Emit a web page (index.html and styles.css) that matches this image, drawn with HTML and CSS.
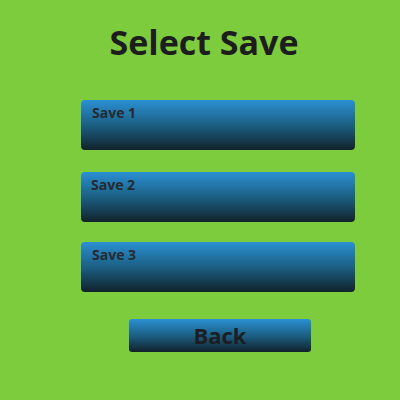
FILE: index.html
```html
<!DOCTYPE html>
<html>
<head>
<meta charset="utf-8">
<link rel="stylesheet" href="styles.css">
</head>
<body>
<div class="screen">
  <h1 class="title">Select Save</h1>
  <div class="slots">
    <button class="slot">Save 1</button>
    <button class="slot slot-2">Save 2</button>
    <button class="slot slot-3">Save 3</button>
  </div>
  <button class="back">Back</button>
</div>
</body>
</html>
```
FILE: styles.css
```css
html, body {
  margin: 0;
  padding: 0;
}
body {
  width: 400px;
  height: 400px;
  background: #7ccc3e;
  font-family: "Open Sans", "DejaVu Sans", sans-serif;
  overflow: hidden;
}
.screen {
  display: flex;
  flex-direction: column;
  align-items: center;
}
.title {
  margin: 21px 0 0 8px;
  font-size: 34px;
  line-height: 42px;
  font-weight: 700;
  color: #1d1d1d;
  letter-spacing: 0;
}
.slots {
  display: flex;
  flex-direction: column;
  margin-top: 37px;
  margin-left: 36px;
}
.slot {
  width: 274px;
  height: 50px;
  border: none;
  border-radius: 4px;
  background: linear-gradient(to bottom, #2a90d2 0%, #1c5f84 50%, #11222b 100%);
  color: #242a30;
  font-family: inherit;
  font-weight: 700;
  font-size: 14px;
  text-align: left;
  padding: 3px 11px 0 11px;
  display: flex;
  align-items: flex-start;
  box-sizing: border-box;
}
.slot-2 {
  margin-top: 22px;
  padding-left: 10px;
}
.slot-3 {
  margin-top: 20px;
}
.back {
  margin-top: 27px;
  margin-left: 40px;
  width: 182px;
  height: 33px;
  border: none;
  border-radius: 3px;
  background: linear-gradient(to bottom, #2a90d2 0%, #1c5f84 50%, #11222b 100%);
  color: #1b1e22;
  font-family: inherit;
  font-weight: 700;
  font-size: 22px;
  line-height: 33px;
  padding: 0;
}
```
